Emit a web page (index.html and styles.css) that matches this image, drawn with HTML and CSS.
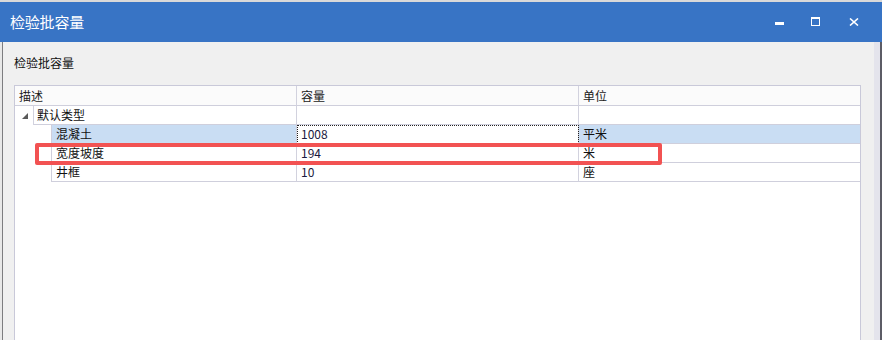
FILE: index.html
```html
<!DOCTYPE html>
<html lang="zh-CN">
<head>
<meta charset="utf-8">
<title>检验批容量</title>
<link rel="stylesheet" href="styles.css">
</head>
<body>
<div class="behind"></div>
<div class="window">
  <div class="titlebar">
    <div class="title">检验批容量</div>
    <div class="controls">
      <span class="min-bar"></span>
      <span class="max-box"></span>
      <svg class="close" width="10" height="8" viewBox="0 0 10 8"><path d="M1 0.5 L9 7.5 M9 0.5 L1 7.5" stroke="#fff" stroke-width="1.6" fill="none"/></svg>
    </div>
  </div>
  <div class="content">
    <div class="frame">
      <div class="label">检验批容量</div>
      <div class="grid">
        <div class="row hdr">
          <div class="c c1">描述</div>
          <div class="c c2">容量</div>
          <div class="c c3">单位</div>
        </div>
        <div class="row group">
          <div class="expander">
            <svg width="6" height="6" viewBox="0 0 6 6"><polygon points="6,0 6,6 0,6" fill="#5a5a5a"/></svg>
          </div>
          <div class="c g1">默认类型</div>
          <div class="c c2"></div>
          <div class="c c3"></div>
        </div>
        <div class="row data sel">
          <div class="indent"></div>
          <div class="c d1">混凝土</div>
          <div class="c c2 focus">1008</div>
          <div class="c c3">平米</div>
        </div>
        <div class="row data">
          <div class="indent"></div>
          <div class="c d1">宽度坡度</div>
          <div class="c c2">194</div>
          <div class="c c3">米</div>
        </div>
        <div class="row data">
          <div class="indent"></div>
          <div class="c d1">井框</div>
          <div class="c c2">10</div>
          <div class="c c3">座</div>
        </div>
        <div class="highlight"></div>
      </div>
    </div>
    <div class="rightedge"></div>
  </div>
</div>
</body>
</html>
```

FILE: styles.css
```css
* { box-sizing: border-box; }
html, body {
  margin: 0;
  padding: 0;
  width: 882px;
  height: 340px;
  overflow: hidden;
  background: #e8e8e8;
  font-family: "Noto Sans CJK SC", "Microsoft YaHei", sans-serif;
  font-size: 12px;
  color: #111;
}
.behind {
  height: 2px;
  background: #d9d9d9;
}
.window {
  display: flex;
  flex-direction: column;
  height: 338px;
}
.titlebar {
  height: 40px;
  background: #3874c5;
  display: flex;
  align-items: center;
  justify-content: space-between;
  color: #fff;
}
.title {
  padding-left: 10px;
  font-size: 15px;
  line-height: 20px;
  letter-spacing: -0.2px;
}
.controls {
  display: flex;
  align-items: flex-start;
  height: 40px;
  padding-right: 23px;
}
.min-bar {
  display: block;
  width: 9px;
  height: 3px;
  background: #fff;
  margin-top: 20px;
  margin-right: 27px;
}
.max-box {
  display: block;
  width: 9px;
  height: 9px;
  border: 1px solid #fff;
  border-top-width: 2px;
  margin-top: 15px;
  margin-right: 29px;
}
.close {
  display: block;
  margin-top: 16px;
}
.content {
  flex: 1;
  display: flex;
  background: #f0f0f0;
  margin-left: 2px;
  border-left: 1px solid #7d7d80;
  border-right: 2px solid #5c5c66;
}
.frame {
  flex: 1;
  padding-top: 13px;
  padding-left: 11px;
}
.label {
  font-size: 12px;
  line-height: 16px;
  height: 16px;
  color: #111;
}
.grid {
  position: relative;
  margin-top: 14px;
  width: 847px;
  height: 260px;
  background: #fff;
  border: 1px solid #c9c9d9;
  border-bottom: none;
}
.rightedge {
  width: 6px;
  background: #e4e4ec;
}
.row {
  display: flex;
  height: 19px;
}
.c {
  height: 19px;
  line-height: 18px;
  padding-left: 4px;
  white-space: nowrap;
  border-bottom: 1px solid #cfcfdc;
}
.c1 { width: 282px; border-right: 1px solid #d2d2de; }
.c2 { width: 282px; border-right: 1px solid #d2d2de; }
.c3 { width: 281px; }
.hdr { height: 20px; }
.hdr .c {
  height: 20px;
  line-height: 19px;
  background: #fbfbfb;
  color: #1a1a1a;
}
.expander {
  width: 19px;
  height: 19px;
  border-right: 1px solid #d2d2de;
  display: flex;
  align-items: center;
  padding-left: 7px;
}
.expander svg { margin-top: 1px; }
.g1 {
  width: 263px;
  padding-left: 3px;
  border-right: 1px solid #d2d2de;
}
.indent {
  width: 36px;
  height: 19px;
}
.d1 {
  width: 246px;
  border-left: 1px solid #cfcfdc;
  border-right: 1px solid #d2d2de;
}
.data .c2 { color: #1a1a40; }
.data .c3 { color: #111; }
.sel .d1, .sel .c3 { background: #c9ddf3; }
.focus {
  outline: 1px dotted #222;
  outline-offset: -1px;
}
.highlight {
  position: absolute;
  left: 20px;
  top: 57px;
  width: 627px;
  height: 22px;
  border: 4px solid #f25252;
  border-radius: 2px;
}
```
